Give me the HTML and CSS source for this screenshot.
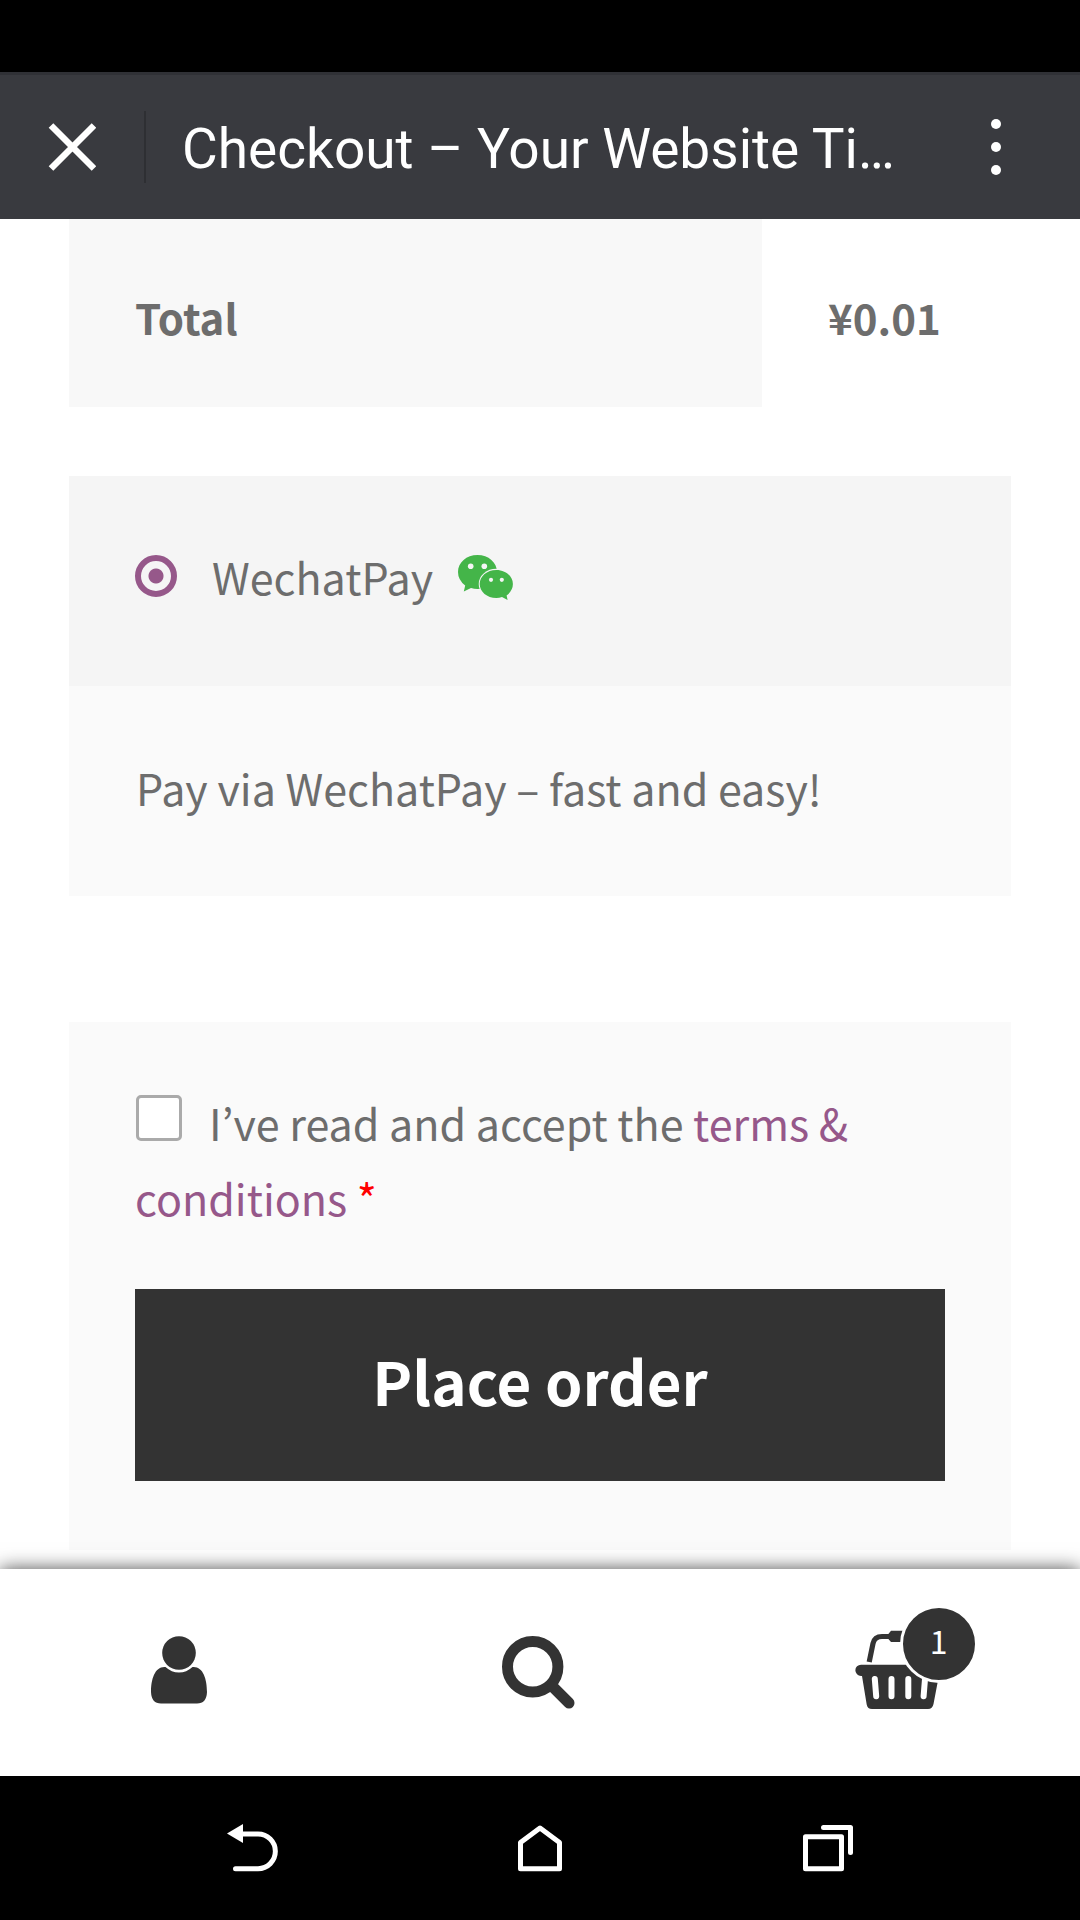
FILE: index.html
```html
<!DOCTYPE html>
<html lang="en">
<head>
<meta charset="utf-8">
<meta name="viewport" content="width=device-width, initial-scale=1">
<title>Checkout – Your Website Title</title>
<link rel="stylesheet" href="styles.css">
</head>
<body>
<div class="status-bar"></div>

<header class="app-bar">
  <button class="icon-button close" type="button" aria-label="Close">
    <svg width="48" height="48" viewBox="0 0 48 48"><path d="M3 2.500L46 45.500M46 2.500L3 45.500" stroke="#fff" stroke-width="6.500" fill="none"/></svg>
  </button>
  <span class="divider"></span>
  <h1 class="title">Checkout – Your Website Ti…</h1>
  <button class="icon-button more" type="button" aria-label="More options">
    <svg width="10" height="58" viewBox="0 0 10 58" fill="#fff"><circle cx="5" cy="6" r="5"/><circle cx="5" cy="29" r="5"/><circle cx="5" cy="52" r="5"/></svg>
  </button>
</header>

<main class="content">
  <table class="totals">
    <tr><th scope="row">Total</th><td>¥0.01</td></tr>
  </table>

  <form class="checkout">
    <section class="payment">
      <div class="method">
        <input class="radio" type="radio" id="wechat" name="payment" checked>
        <label for="wechat">WechatPay</label>
        <svg class="wechat" width="56" height="46" viewBox="0 0 56 46">
          <path fill="#44b549" d="M19.500 0C30.500 0 39 7.500 39 17S30.500 34 19.500 34Q16 34 13 33L5.800 36.500L7.200 30.500Q0 25 0 17C0 7.500 8.500 0 19.500 0Z"/>
          <circle cx="12.700" cy="11.300" r="2.800" fill="#f5f5f5"/><circle cx="26.300" cy="11.300" r="2.800" fill="#f5f5f5"/>
          <ellipse cx="38.300" cy="29" rx="17.600" ry="15.200" fill="#f5f5f5"/>
          <path fill="#44b549" d="M38.300 15C47.500 15 54.900 21.300 54.900 29Q54.900 35.500 48.600 40.500L49.600 45L44 42Q41.500 43 38.300 43C29 43 21.700 36.700 21.700 29S29 15 38.300 15Z"/>
          <circle cx="33" cy="24.800" r="2.100" fill="#f5f5f5"/><circle cx="43.800" cy="24.800" r="2.100" fill="#f5f5f5"/>
        </svg>
      </div>
      <p class="description">Pay via WechatPay – fast and easy!</p>
    </section>

    <section class="place-order">
      <p class="terms"><input class="checkbox" type="checkbox" id="terms"><label for="terms">I’ve read and accept the <a href="#terms">terms &amp; conditions</a> <span class="required">*</span></label></p>
      <button class="submit" type="submit">Place order</button>
    </section>
  </form>
</main>

<nav class="shop-bar" aria-label="Shop">
  <a href="#account" aria-label="My account">
    <svg width="56" height="68" viewBox="0 0 56 68" fill="#333">
      <circle cx="28" cy="17" r="16.800"/>
      <path d="M14.500 31C4 30 0 43 0 56Q.5 67.500 10 67.500H46Q55.500 67.500 56 56C56 43 52 30 41.500 31Q35.500 36.500 28 36.500T14.500 31Z"/>
    </svg>
  </a>
  <a href="#search" aria-label="Search">
    <svg class="search" width="73" height="73" viewBox="0 0 73 73" fill="none" stroke="#333">
      <circle cx="30.700" cy="30.700" r="25.200" stroke-width="11"/>
      <path d="M51 51L67 67" stroke-width="11" stroke-linecap="round"/>
    </svg>
  </a>
  <a href="#cart" aria-label="Cart">
    <span class="cart">
      <svg width="84" height="80" viewBox="35 90 84 80">
        <path d="M49.200 122L53 103.500Q54.500 96.500 62 96.500H70" fill="none" stroke="#333" stroke-width="5.200"/>
        <path d="M71 90.800H88V102H71L68.800 99.500V93.500Z" fill="#333"/>
        <path d="M41 124.700H119V136.500L117.500 143L113.500 164Q112.500 169 108 169H52Q47.500 169 46.700 164.500L42 136H41A5.650 5.650 0 0 1 41 124.700Z" fill="#333"/>
        <path d="M54.800 139L56.200 156.200M71.500 139V156.200M88.300 139V156.200M105 139L103.600 156.200" stroke="#fff" stroke-width="6" stroke-linecap="round"/>
      </svg>
      <span class="count">1</span>
    </span>
  </a>
</nav>

<nav class="system-bar" aria-label="System">
  <button class="icon-button" type="button" aria-label="Back">
    <svg width="52" height="48" viewBox="0 0 52 48" fill="none" stroke="#fff" stroke-width="5">
      <path d="M16 10H32A17.300 17.300 0 0 1 32 44.700H9.500" stroke-linecap="round"/><path d="M1 9.500L17 0V19Z" fill="#fff" stroke="none"/>
    </svg>
  </button>
  <button class="icon-button" type="button" aria-label="Home">
    <svg width="44" height="48" viewBox="0 0 44 48" fill="none" stroke="#fff" stroke-width="5" stroke-linejoin="round"><path d="M2.500 18.500L22 4L41.500 18.500V44.700H2.500Z"/></svg>
  </button>
  <button class="icon-button" type="button" aria-label="Recent apps">
    <svg width="50" height="48" viewBox="0 0 50 48" fill="none" stroke="#fff" stroke-width="5" stroke-linejoin="round" stroke-linecap="round"><path d="M2.500 12.700H38.500V44.700H2.500ZM20.500 3.500H47.500V28.500"/></svg>
  </button>
</nav>
</body>
</html>
```
FILE: styles.css
```css
* { box-sizing: border-box; }

body {
  margin: 0;
  min-height: 100vh;
  display: flex;
  flex-direction: column;
  background: #fff;
  color: #6d6d6d;
  font-family: "Noto Sans CJK KR", "Noto Sans", sans-serif;
  font-size: 43px;
  line-height: 75px;
}

p, h1 { margin: 0; }
svg { display: block; }
a { color: #96588a; text-decoration: none; }

.icon-button {
  display: flex;
  align-items: center;
  justify-content: center;
  padding: 0;
  border: 0;
  background: none;
}

.status-bar { height: 72px; background: #000; }

.app-bar {
  display: flex;
  align-items: center;
  height: 147px;
  border-top: 3px solid #303136;
  background: #393a3f;
  color: #fff;
}
.close { width: 144px; height: 144px; }
.divider { width: 2px; height: 72px; background: #2e2f33; }
.title {
  flex: 1;
  padding: 4px 0 0 36px;
  font: 400 55px/72px Roboto, sans-serif;
  white-space: nowrap;
}
.more { width: 168px; height: 144px; }

.content { flex: 1; padding: 0 69px 19px; }

.totals { width: 100%; border-collapse: collapse; }
.totals th, .totals td {
  padding: 60px 66px 53px;
  text-align: left;
  font-size: 42px;
  font-weight: 600;
}
.totals th { background: #f8f8f8; }
.totals td { width: 249px; }

.payment { margin-top: 69px; background: #fafafa; }
.method {
  display: flex;
  align-items: center;
  padding: 63px 66px 72px;
  background: #f5f5f5;
}
.radio {
  appearance: none;
  width: 42px;
  height: 42px;
  margin: 0 35px 2px 0;
  border: 6px solid #96588a;
  border-radius: 50%;
  background: radial-gradient(circle, #96588a 7px, transparent 8px);
}
.wechat { margin: 2px 0 0 25px; }
.description { padding: 64px 66px 71px 67px; }

.place-order {
  margin-top: 126px;
  padding: 63px 66px 69px;
  background: #fafafa;
}
.checkbox {
  appearance: none;
  width: 46px;
  height: 46px;
  margin: 0 27px 0 1px;
  border: 3px solid #aaa;
  border-radius: 5px;
  background: #fff;
}
.required { color: #f00; }
.submit {
  display: block;
  width: 100%;
  margin-top: 54px;
  padding: 46px 0 56px;
  border: 0;
  background: #333;
  color: #fff;
  font: inherit;
  font-size: 60px;
  line-height: 90px;
  font-weight: 600;
}

.shop-bar {
  position: relative;
  display: grid;
  grid-template-columns: repeat(3, 1fr);
  height: 207px;
  padding: 0 4px 6px 0;
  background: #fff;
  box-shadow: 0 0 18px rgba(0, 0, 0, .7);
}
.shop-bar a { display: flex; align-items: center; justify-content: center; }
.search { margin: 6px 0 0 2px; }
.cart { position: relative; }
.count {
  position: absolute;
  top: -25px;
  left: 45px;
  width: 78px;
  height: 78px;
  border: 3px solid #fff;
  border-radius: 50%;
  background: #333;
  color: #fff;
  font-size: 32px;
  line-height: 64px;
  text-align: center;
}

.system-bar {
  position: relative;
  display: grid;
  grid-template-columns: repeat(3, 1fr);
  height: 144px;
  padding: 0 10%;
  background: #000;
}
```
